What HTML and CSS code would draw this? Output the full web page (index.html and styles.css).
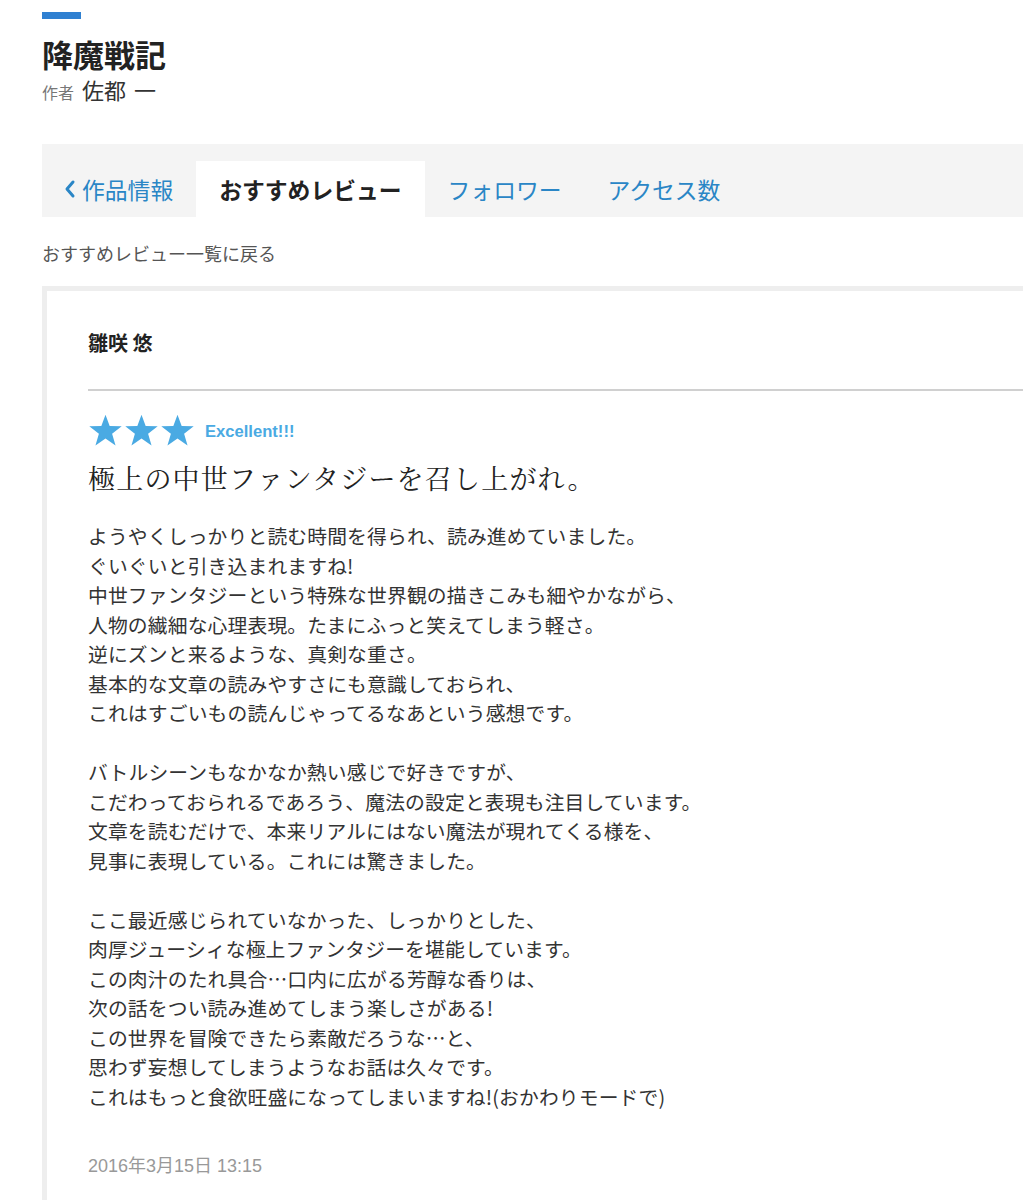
FILE: index.html
```html
<!DOCTYPE html>
<html lang="ja">
<head>
<meta charset="utf-8">
<title>降魔戦記 おすすめレビュー</title>
<link rel="stylesheet" href="styles.css">
</head>
<body>
<div class="page">
  <header class="work-header">
    <div class="accent-bar"></div>
    <h1 class="work-title">降魔戦記</h1>
    <p class="work-author"><span class="author-label">作者</span><span class="author-name">佐都 一</span></p>
  </header>

  <nav class="tabs">
    <a class="tab tab-back" href="#"><svg class="chevron" viewBox="0 0 12 20" width="12" height="20"><polyline points="9,3 3,10 9,17" fill="none" stroke="currentColor" stroke-width="3" stroke-linecap="round" stroke-linejoin="round"/></svg>作品情報</a>
    <a class="tab tab-active" href="#">おすすめレビュー</a>
    <a class="tab" href="#">フォロワー</a>
    <a class="tab" href="#">アクセス数</a>
  </nav>

  <a class="back-link" href="#">おすすめレビュー一覧に戻る</a>

  <article class="review-card">
    <div class="reviewer">雛咲 悠</div>
    <hr class="divider">
    <div class="rating">
      <span class="stars">
        <svg class="star" viewBox="0 0 24 23" width="35" height="33"><polygon points="12,0.5 14.9,8.4 23.3,8.6 16.6,13.8 19,21.9 12,17.1 5,21.9 7.4,13.8 0.7,8.6 9.1,8.4"/></svg>
        <svg class="star" viewBox="0 0 24 23" width="35" height="33"><polygon points="12,0.5 14.9,8.4 23.3,8.6 16.6,13.8 19,21.9 12,17.1 5,21.9 7.4,13.8 0.7,8.6 9.1,8.4"/></svg>
        <svg class="star" viewBox="0 0 24 23" width="35" height="33"><polygon points="12,0.5 14.9,8.4 23.3,8.6 16.6,13.8 19,21.9 12,17.1 5,21.9 7.4,13.8 0.7,8.6 9.1,8.4"/></svg>
      </span>
      <span class="rating-label">Excellent!!!</span>
    </div>
    <h2 class="review-title">極上の中世ファンタジーを召し上がれ。</h2>
    <div class="review-body">
      <p>ようやくしっかりと読む時間を得られ、読み進めていました。<br>ぐいぐいと引き込まれますね!<br>中世ファンタジーという特殊な世界観の描きこみも細やかながら、<br>人物の繊細な心理表現。たまにふっと笑えてしまう軽さ。<br>逆にズンと来るような、真剣な重さ。<br>基本的な文章の読みやすさにも意識しておられ、<br>これはすごいもの読んじゃってるなあという感想です。</p>
      <p>バトルシーンもなかなか熱い感じで好きですが、<br>こだわっておられるであろう、魔法の設定と表現も注目しています。<br>文章を読むだけで、本来リアルにはない魔法が現れてくる様を、<br>見事に表現している。これには驚きました。</p>
      <p>ここ最近感じられていなかった、しっかりとした、<br>肉厚ジューシィな極上ファンタジーを堪能しています。<br>この肉汁のたれ具合…口内に広がる芳醇な香りは、<br>次の話をつい読み進めてしまう楽しさがある!<br>この世界を冒険できたら素敵だろうな…と、<br>思わず妄想してしまうようなお話は久々です。<br>これはもっと食欲旺盛になってしまいますね!(おかわりモードで)</p>
    </div>
    <div class="review-date">2016年3月15日 13:15</div>
  </article>
</div>
</body>
</html>
```

FILE: styles.css
```css
html, body {
  margin: 0;
  padding: 0;
  background: #ffffff;
  overflow-x: hidden;
}

body {
  font-family: "Noto Sans CJK JP", "Noto Sans", sans-serif;
  color: #333333;
}

.page {
  padding-left: 42px;
}

.accent-bar {
  width: 39px;
  height: 7px;
  margin-top: 12px;
  background: #2f80d1;
}

.work-title {
  margin: 15px 0 0;
  font-size: 31px;
  line-height: 40px;
  font-weight: 700;
  color: #222222;
}

.work-author {
  margin: 0;
  line-height: 30px;
  height: 30px;
}

.author-label {
  font-size: 16px;
  color: #777777;
}

.author-name {
  margin-left: 8px;
  font-size: 22px;
  word-spacing: 3px;
  color: #333333;
}

.tabs {
  display: flex;
  align-items: flex-end;
  height: 73px;
  margin-top: 40px;
  background: #f4f4f4;
}

.tab {
  display: flex;
  align-items: center;
  height: 56px;
  padding: 0 23px;
  font-size: 22.8px;
  color: #2a86c6;
  text-decoration: none;
  white-space: nowrap;
}

.tab-back {
  padding-left: 22px;
}

.chevron {
  margin-right: 6px;
}

.tab-active {
  background: #ffffff;
  color: #222222;
  font-weight: 700;
}

.back-link {
  display: block;
  margin-top: 23px;
  font-size: 18px;
  line-height: 26px;
  color: #555555;
  text-decoration: none;
}

.review-card {
  margin-top: 20px;
  margin-right: -30px;
  border: 5px solid #eeeeee;
  padding: 0 0 40px 41px;
}

.reviewer {
  padding-top: 37px;
  font-size: 20px;
  line-height: 30px;
  font-weight: 700;
  color: #222222;
}

.divider {
  margin: 31px 0 0;
  border: 0;
  height: 2px;
  background: #d0d0d0;
}

.rating {
  display: flex;
  align-items: center;
  margin-top: 23px;
  height: 33px;
}

.stars {
  display: flex;
  gap: 1px;
}

.star {
  display: block;
  fill: #4aaae3;
}

.rating-label {
  margin-left: 10px;
  margin-top: 3px;
  font-family: "Liberation Sans", Arial, sans-serif;
  font-weight: 700;
  font-size: 16.6px;
  color: #4aaae3;
}

.review-title {
  margin: 13px 0 0;
  font-family: "Noto Serif CJK JP", "IPAMincho", "Liberation Serif", serif;
  font-weight: 400;
  font-size: 27px;
  line-height: 36px;
  letter-spacing: 1.2px;
  color: #222222;
}

.review-body {
  margin-top: 25px;
  font-size: 19.8px;
  line-height: 29.5px;
  letter-spacing: 0.15px;
  color: #333333;
}

.review-body p {
  margin: 0 0 29.5px;
}

.review-body p:last-child {
  margin-bottom: 0;
}

.review-date {
  margin-top: 43px;
  font-family: "Liberation Sans", "Noto Sans CJK JP", sans-serif;
  font-size: 18px;
  line-height: 24px;
  color: #999999;
}
```
